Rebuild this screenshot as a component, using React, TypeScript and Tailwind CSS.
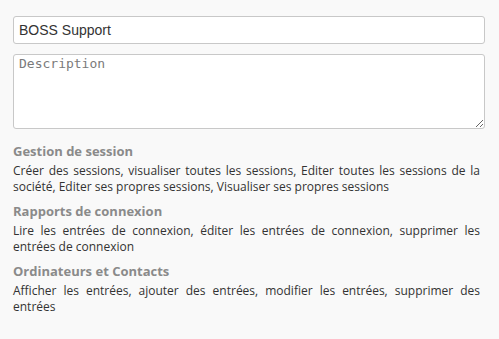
import React from 'react';

interface PermissionGroup {
  title: string;
  rights: string;
}

const groups: PermissionGroup[] = [
  {
    title: 'Gestion de session',
    rights:
      'Créer des sessions, visualiser toutes les sessions, Editer toutes les sessions de la société, Editer ses propres sessions, Visualiser ses propres sessions',
  },
  {
    title: 'Rapports de connexion',
    rights: 'Lire les entrées de connexion, éditer les entrées de connexion, supprimer les entrées de connexion',
  },
  {
    title: 'Ordinateurs et Contacts',
    rights: 'Afficher les entrées, ajouter des entrées, modifier les entrées, supprimer des entrées',
  },
];

const App: React.FC = () => {
  return (
    <div className="w-[499px] h-[339px] bg-[#f9f9f9] pl-[13px] pr-[14px] pt-[16px] overflow-hidden">
      <input
        type="text"
        defaultValue="BOSS Support"
        className="block w-full h-[28px] bg-white border border-[#c8c8c8] rounded-[3px] px-[5px] text-[14px] text-[#333] outline-none font-['Liberation_Sans',Arial,sans-serif]"
      />
      <textarea
        placeholder="Description"
        className="block w-full h-[75px] mt-[10px] bg-white border border-[#c8c8c8] rounded-[3px] px-[5px] py-0 text-[13px] leading-[18px] text-[#333] placeholder:text-[#7a7a7a] outline-none font-['DejaVu_Sans_Mono',monospace]"
      />
      <div className="mt-[12px] mr-[5px] font-['Open_Sans','Noto_Sans',sans-serif]">
        {groups.map((g) => (
          <div key={g.title} className="mb-[6px]">
            <p className="text-[13px] leading-[20px] mb-[2px] font-bold text-[#8a8a8a]">{g.title}</p>
            <p className="text-[12px] leading-[16px] text-[#333] text-justify">{g.rights}</p>
          </div>
        ))}
      </div>
    </div>
  );
};

export default App;
